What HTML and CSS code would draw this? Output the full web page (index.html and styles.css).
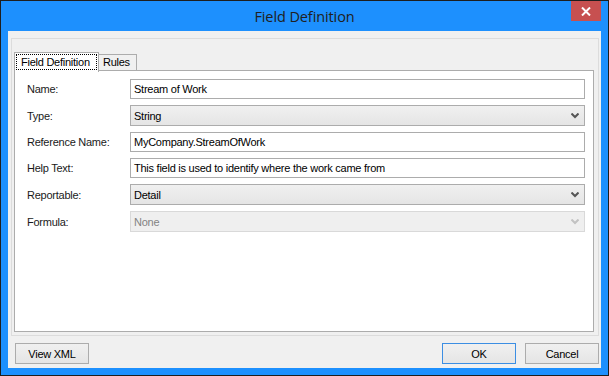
FILE: index.html
```html
<!DOCTYPE html>
<html>
<head>
<meta charset="utf-8">
<link rel="stylesheet" href="styles.css">
</head>
<body>
<div class="window">
  <div class="titlebar">
    <span></span>
    <span class="title">Field Definition</span>
    <span class="close">
      <svg width="10" height="9" viewBox="0 0 10 9"><path d="M1 0.5 L9 8.5 M9 0.5 L1 8.5" stroke="#fff" stroke-width="2"/></svg>
    </span>
  </div>
  <div class="content">
    <div class="panel">
      <div class="tabs">
        <div class="tab active"><span class="focus">Field Definition</span></div>
        <div class="tab">Rules</div>
      </div>
      <div class="page">
        <div class="form">
          <label>Name:</label>
          <div class="input">Stream of Work</div>
          <label>Type:</label>
          <div class="select"><span>String</span><svg class="chev" width="8" height="6" viewBox="0 0 8 6"><path d="M0.5 0.5 L4 4 L7.5 0.5" fill="none" stroke="#555" stroke-width="2"/></svg></div>
          <label>Reference Name:</label>
          <div class="input">MyCompany.StreamOfWork</div>
          <label>Help Text:</label>
          <div class="input">This field is used to identify where the work came from</div>
          <label>Reportable:</label>
          <div class="select"><span>Detail</span><svg class="chev" width="8" height="6" viewBox="0 0 8 6"><path d="M0.5 0.5 L4 4 L7.5 0.5" fill="none" stroke="#555" stroke-width="2"/></svg></div>
          <label>Formula:</label>
          <div class="select disabled"><span>None</span><svg class="chev" width="8" height="6" viewBox="0 0 8 6"><path d="M0.5 0.5 L4 4 L7.5 0.5" fill="none" stroke="#c2c2c2" stroke-width="2"/></svg></div>
        </div>
      </div>
    </div>
    <div class="buttons">
      <div class="btn">View XML</div>
      <div class="spacer"></div>
      <div class="btn default">OK</div>
      <div class="btn">Cancel</div>
    </div>
  </div>
</div>
</body>
</html>
```

FILE: styles.css
```css
html, body {
  margin: 0;
  padding: 0;
  background: #1d90fe;
}
.window {
  width: 609px;
  height: 376px;
  box-sizing: border-box;
  border: 1px solid #1e1e1e;
  background: #1d90fe;
  padding: 0 7px 7px 7px;
  display: flex;
  flex-direction: column;
  font-family: "Liberation Sans", Arial, sans-serif;
  font-size: 11px;
  letter-spacing: -0.25px;
  color: #000;
}
.titlebar {
  height: 30px;
  flex: none;
  display: grid;
  grid-template-columns: 1fr auto 1fr;
  align-items: start;
}
.title {
  font-family: "Open Sans", "Noto Sans", sans-serif;
  font-size: 14.5px;
  line-height: 31px;
  color: #202020;
  letter-spacing: -0.1px;
}
.close {
  justify-self: end;
  width: 30px;
  height: 20px;
  background: #c75050;
  display: flex;
  align-items: center;
  justify-content: center;
}
.content {
  flex: 1;
  background: #f0f0f0;
  display: flex;
  flex-direction: column;
  padding: 7px 2px 4px 3px;
}
.panel {
  height: 298px;
  box-sizing: border-box;
  border: 1px solid #dcdcdc;
  padding: 13px 4px 3px 2px;
  display: flex;
  flex-direction: column;
}
.tabs {
  display: flex;
  align-items: flex-end;
  height: 18px;
  flex: none;
  position: relative;
  z-index: 1;
}
.tab {
  box-sizing: border-box;
  height: 16px;
  border: 1px solid #acacac;
  border-bottom: none;
  background: #f0f0f0;
  padding: 0 6px 0 4px;
  line-height: 15px;
  white-space: nowrap;
}
.tab + .tab {
  border-left: none;
}
.tab.active {
  height: 20px;
  width: 85px;
  margin-bottom: -2px;
  background: #fff;
  padding: 2px 2px 0 2px;
}
.focus {
  display: block;
  outline: 1px dotted #000;
  outline-offset: 0;
  line-height: 14px;
  padding: 0 4px 0 4px;
}
.page {
  flex: 1;
  border: 1px solid #acacac;
  background: #fff;
  padding: 8px 8px 0 12px;
}
.form {
  display: grid;
  grid-template-columns: 103px 1fr;
  row-gap: 6px;
  align-items: center;
}
label {
  color: #1a1a1a;
}
.input {
  box-sizing: border-box;
  height: 20px;
  border: 1px solid #acacac;
  background: #fff;
  padding: 0 3px;
  line-height: 18px;
  white-space: nowrap;
}
.select {
  box-sizing: border-box;
  height: 21px;
  border: 1px solid #acacac;
  background: linear-gradient(#f0f0f0, #e5e5e5);
  padding: 0 4px 0 3px;
  display: flex;
  align-items: center;
  justify-content: space-between;
}
.select.disabled {
  background: #efefef;
  border-color: #d9d9d9;
  color: #838383;
}
.chev {
  margin-right: 1px;
}
.buttons {
  display: flex;
  margin-top: 7px;
  padding-left: 4px;
  gap: 9px;
}
.spacer {
  flex: 1;
}
.btn {
  box-sizing: border-box;
  width: 74px;
  height: 21px;
  border: 1px solid #acacac;
  background: linear-gradient(#f0f0f0, #e5e5e5);
  display: flex;
  align-items: center;
  justify-content: center;
}
.btn.default {
  border-color: #3c8ee3;
}
```
